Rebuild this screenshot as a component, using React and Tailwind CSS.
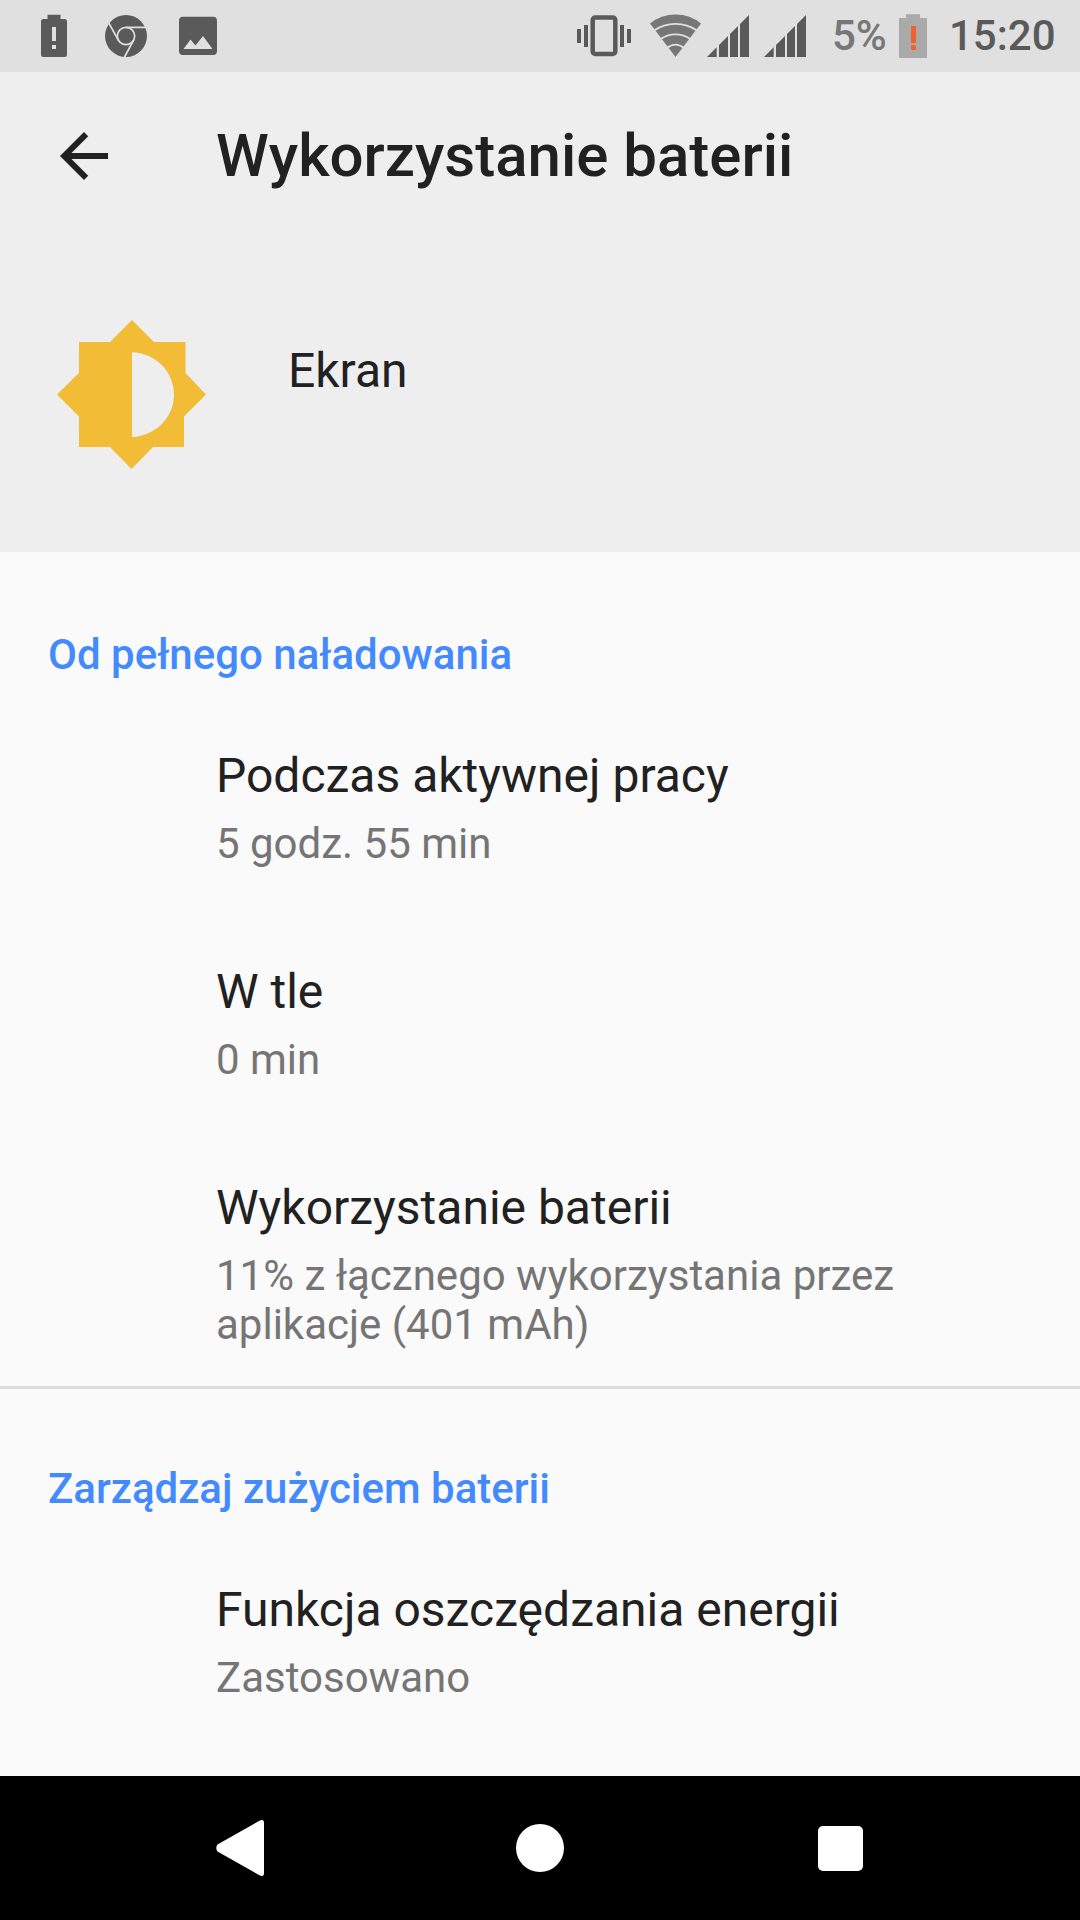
const usage = [
  { title: "Podczas aktywnej pracy", summary: "5 godz. 55 min" },
  { title: "W tle", summary: "0 min" },
  { title: "Wykorzystanie baterii", summary: "11% z łącznego wykorzystania przez aplikacje (401 mAh)" },
]

const manage = [{ title: "Funkcja oszczędzania energii", summary: "Zastosowano" }]

function SignalIcon({ className }) {
  return (
    <svg className={className} width="42" height="72" viewBox="0 0 42 72" fill="#5a5a5a">
      <path d="M0 57L9.7 47.3V57z" />
      <path d="M12 57V45L21 36V57z" />
      <path d="M23 57V34L31 26V57z" />
      <path d="M33 57V24L42 15V57z" />
    </svg>
  )
}

function StatusBar() {
  return (
    <div className="flex h-[72px] items-center bg-[#e0e0e0] pl-[41px] text-[42px] font-medium leading-[72px]">
      <svg width="26" height="72" viewBox="0 0 26 72" fill="#5a5a5a">
        <path
          fillRule="evenodd"
          d="M6.5 14.7H19.5V19H23.500Q26 19 26 21.500V54.500Q26 57 23.500 57H2.500Q0 57 0 54.500V21.500Q0 19 2.500 19H6.500zM11 27V41H15V27zM11 45V49H15V45z"
        />
      </svg>
      <svg className="ml-[38px]" width="42" height="72" viewBox="0 0 42 72" fill="none">
        <circle cx="21" cy="36" r="21" fill="#5a5a5a" />
        <g stroke="#e0e0e0" strokeWidth="1.7">
          <circle cx="21" cy="36" r="8.700" />
          <path d="M21 27.300H41M13.500 40.400L3.500 22.500M28.500 40.400L19 58" />
        </g>
      </svg>
      <svg className="ml-8" width="38" height="72" viewBox="0 0 38 72">
        <rect y="16.700" width="38" height="38.300" rx="4" fill="#5a5a5a" />
        <path d="M4.500 49L11.500 39.500L16.500 45.500L24 36L33.500 49z" fill="#e0e0e0" />
      </svg>

      <svg className="ml-[360px]" width="54" height="72" viewBox="0 0 54 72" fill="#5a5a5a">
        <path d="M0 29h4v14H0zM7 25h4v22H7zM43 25h4v22h-4zM50 29h4v14h-4z" />
        <rect x="15.700" y="17.500" width="22.600" height="36.500" rx="2.500" fill="none" stroke="#5a5a5a" strokeWidth="4.500" />
      </svg>
      <svg className="ml-[19px]" width="51" height="72" viewBox="0 0 51 72">
        <path d="M25.500 57L0 23.500Q11 14.500 25.500 14.500T51 23.500z" fill="#777777" />
        <g fill="none" stroke="#e0e0e0" strokeWidth="1.800">
          <path d="M4 30.500Q13.500 23.800 25.500 23.800T47 30.500" />
          <path d="M10 39.500Q17 34.300 25.500 34.300T41 39.500" />
          <path d="M17 48Q21 44.700 25.500 44.700T34 48" />
        </g>
      </svg>
      <SignalIcon className="ml-[6px]" />
      <SignalIcon className="ml-[15px]" />
      <span className="ml-[26px] w-[54px] whitespace-nowrap text-[#777777]">5%</span>
      <svg className="ml-[13px]" width="28" height="72" viewBox="0 0 28 72">
        <path d="M7 14.300H21V18H28V58H0V18H7z" fill="#aaaaaa" />
        <rect x="12" y="26" width="5" height="17" rx=".7" fill="#f4602a" />
        <rect x="12" y="45" width="5" height="5" rx="1.500" fill="#f4602a" />
      </svg>
      <span className="ml-[22px] text-[#5a5a5a]">15:20</span>
    </div>
  )
}

function Header() {
  return (
    <header className="h-[480px] bg-[#eeeeee]">
      <div className="flex h-[168px] items-center pl-12">
        <svg width="72" height="72" viewBox="0 0 24 24" fill="#212121">
          <path d="M20 11H7.830l5.590-5.590L12 4l-8 8 8 8 1.410-1.410L7.830 13H20v-2z" />
        </svg>
        <h1 className="ml-24 text-[60px] font-medium leading-[70px]">Wykorzystanie baterii</h1>
      </div>
      <div className="flex items-start pl-[57px] pt-20">
        <svg width="149" height="149" viewBox="0 0 149 149" fill="#f2bc37">
          <path d="M75 0L97 22H128.500V53L149 74.500L127 96.500V127H96L74.500 149L53 127H22V96.500L0 74.500L22 53V22H53zM75 32.300V117.300C98 116 117 98 117 74.800C117 51 98 33 75 32.300z" />
        </svg>
        <p className="ml-[82px] mt-[23px] text-[48px] leading-[56px]">Ekran</p>
      </div>
    </header>
  )
}

function Category({ title, items, className }) {
  return (
    <section className={className}>
      <h2 className="pl-12 text-[42px] font-medium leading-[49px] text-[#448aff]">{title}</h2>
      <ul className="mt-[69px] space-y-24 pl-[216px] pr-[120px]">
        {items.map((item) => (
          <li key={item.title}>
            <p className="text-[48px] leading-[56px]">{item.title}</p>
            <p className="mt-[15px] text-[42px] leading-[49px] text-[#757575]">{item.summary}</p>
          </li>
        ))}
      </ul>
    </section>
  )
}

function NavBar() {
  return (
    <nav className="flex h-36 items-center bg-black px-[90px]">
      <div className="flex w-[300px] justify-center">
        <svg width="48" height="56" viewBox="0 0 48 56" fill="white">
          <path d="M1.500 24.500L43 1Q48 -1.500 48 3V53Q48 57.500 43 55L1.500 31.500Q-1 28 1.500 24.500z" />
        </svg>
      </div>
      <div className="flex w-[300px] justify-center">
        <div className="size-12 rounded-full bg-white" />
      </div>
      <div className="flex w-[300px] justify-center">
        <div className="size-[45px] rounded-[5px] bg-white" />
      </div>
    </nav>
  )
}

export default function App() {
  return (
    <div className="flex h-[1920px] w-[1080px] flex-col overflow-hidden bg-[#fafafa] font-['Roboto',sans-serif] text-[#212121]">
      <StatusBar />
      <Header />
      <main className="flex-1">
        <Category title="Od pełnego naładowania" items={usage} className="border-b-3 border-[#dcdcdc] pb-[37px] pt-[78px]" />
        <Category title="Zarządzaj zużyciem baterii" items={manage} className="pt-[75px]" />
      </main>
      <NavBar />
    </div>
  )
}
